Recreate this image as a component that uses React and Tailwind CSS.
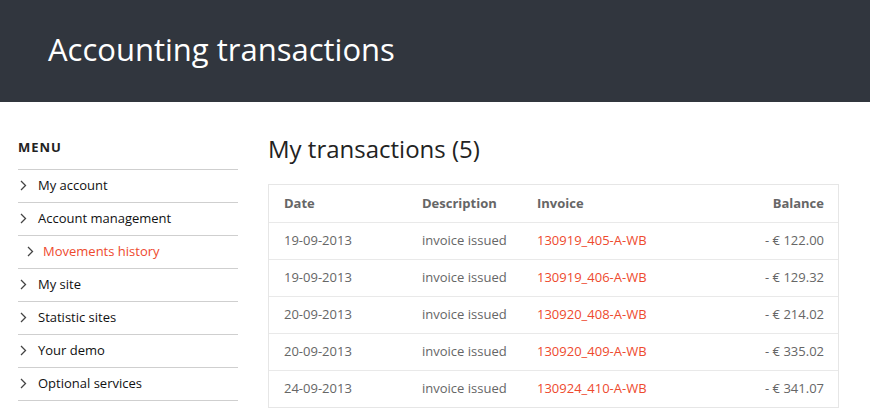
import React from 'react'

const menu = [
    { label: 'My account' },
    { label: 'Account management' },
    { label: 'Movements history', active: true },
    { label: 'My site' },
    { label: 'Statistic sites' },
    { label: 'Your demo' },
    { label: 'Optional services' },
]

const rows = [
    { date: '19-09-2013', desc: 'invoice issued', invoice: '130919_405-A-WB', balance: '- € 122.00' },
    { date: '19-09-2013', desc: 'invoice issued', invoice: '130919_406-A-WB', balance: '- € 129.32' },
    { date: '20-09-2013', desc: 'invoice issued', invoice: '130920_408-A-WB', balance: '- € 214.02' },
    { date: '20-09-2013', desc: 'invoice issued', invoice: '130920_409-A-WB', balance: '- € 335.02' },
    { date: '24-09-2013', desc: 'invoice issued', invoice: '130924_410-A-WB', balance: '- € 341.07' },
]

const Chevron = ({ className }) => (
    <svg width="7" height="11" viewBox="0 0 7 11" className={className}>
        <path d="M1 1 L5.5 5.5 L1 10" fill="none" stroke="currentColor" strokeWidth="1.3" />
    </svg>
)

const App = () => {
    return (
        <div className="min-h-screen bg-white font-['Open_Sans',sans-serif]">
            <header className="h-[102px] bg-[#31363e] flex items-center pl-[48px] pb-[4px]">
                <h1 className="text-[31px] text-white font-normal">Accounting transactions</h1>
            </header>

            <div className="flex pl-[18px] pr-[31px]">
                <aside className="w-[220px] shrink-0 pt-[37px]">
                    <h3 className="text-[13px] font-bold tracking-[1px] text-[#222] leading-[16px] pb-[14px] border-b border-[#cfcfcf]">MENU</h3>
                    <ul>
                        {menu.map((item) => (
                            <li
                                key={item.label}
                                className={`h-[33px] flex items-center border-b border-[#cfcfcf] text-[13px] ${item.active ? 'pl-[9px] text-[#ee4a2e]' : 'pl-[2px] text-[#111]'}`}
                            >
                                <Chevron className={`text-[#444] mb-[2px] ${item.active ? 'mr-[9px]' : 'mr-[11px]'}`} />
                                <span>{item.label}</span>
                            </li>
                        ))}
                    </ul>
                </aside>

                <main className="flex-1 ml-[30px] pt-[30px]">
                    <h2 className="text-[24px] text-[#222] leading-[34px] mb-[18px]">My transactions (5)</h2>
                    <div className="border border-[#e6e6e6]">
                        <table className="w-full text-[13px] border-collapse">
                            <thead>
                                <tr className="h-[37px] text-[#666] font-bold">
                                    <th className="text-left font-bold pl-[15px] w-[153px]">Date</th>
                                    <th className="text-left font-bold w-[115px]">Description</th>
                                    <th className="text-left font-bold">Invoice</th>
                                    <th className="text-right font-bold pr-[14px]">Balance</th>
                                </tr>
                            </thead>
                            <tbody>
                                {rows.map((r) => (
                                    <tr key={r.invoice} className="h-[37px] border-t border-[#e9e9e9] text-[#666]">
                                        <td className="pl-[15px]">{r.date}</td>
                                        <td>{r.desc}</td>
                                        <td className="text-[#ee4a2e]">{r.invoice}</td>
                                        <td className="text-right pr-[14px]">{r.balance}</td>
                                    </tr>
                                ))}
                            </tbody>
                        </table>
                    </div>
                </main>
            </div>
        </div>
    )
}

export default App
